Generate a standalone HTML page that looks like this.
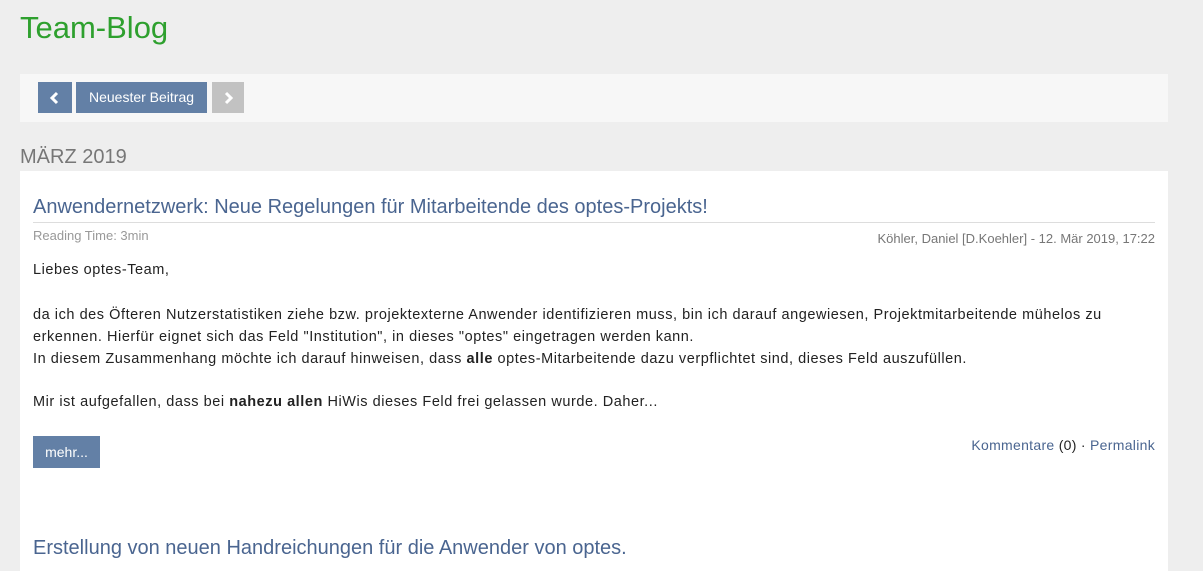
<!DOCTYPE html>
<html><head><meta charset="utf-8"><style>
body{margin:0;background:#eeeeee;font-family:"Liberation Sans","DejaVu Sans",sans-serif;width:1203px;height:559px;overflow:hidden;position:relative}
.a{position:absolute;white-space:nowrap}
h1{position:absolute;left:20px;top:10px;margin:0;font-weight:normal;font-size:31px;color:#2ea02e}
.bar{position:absolute;left:20px;top:74px;width:1148px;height:48px;background:#f7f7f7}
.btn{position:absolute;top:82px;height:31px;background:#6380a6;color:#fff;font-size:14px;line-height:31px;text-align:center}
.card{position:absolute;left:20px;top:171px;width:1148px;height:400px;background:#fff}
.t{font-size:14.5px;color:#222;letter-spacing:0.55px}
.lnk{color:#4a6590}
</style></head><body>
<h1>Team-Blog</h1>
<div class="bar"></div>
<div class="btn" style="left:38px;width:34px"><svg width="12" height="14" viewBox="0 0 12 14" style="margin-top:9px"><path d="M8 2L3 7L8 12" stroke="#fff" stroke-width="3" fill="none"/></svg></div>
<div class="btn" style="left:76px;width:131px">Neuester Beitrag</div>
<div class="btn" style="left:212px;width:32px;background:#c2c2c2"><svg width="12" height="14" viewBox="0 0 12 14" style="margin-top:9px"><path d="M4 2L9 7L4 12" stroke="#fff" stroke-width="3" fill="none"/></svg></div>
<div class="a" style="left:20px;top:146px;font-size:20px;color:#777">MÄRZ 2019</div>
<div class="card"></div>
<div class="a lnk" style="left:33px;top:196px;font-size:20px">Anwendernetzwerk: Neue Regelungen für Mitarbeitende des optes-Projekts!</div>
<div class="a" style="left:33px;top:222px;width:1122px;border-top:1px solid #ddd"></div>
<div class="a" style="left:33px;top:228px;font-size:13px;color:#999">Reading Time: 3min</div>
<div class="a" style="right:48px;top:231px;font-size:13px;color:#777">Köhler, Daniel [D.Koehler] - 12. Mär 2019, 17:22</div>
<div class="a t" style="left:33px;top:262px">Liebes optes-Team,</div>
<div class="a t" style="left:33px;top:304px;line-height:22px">da ich des Öfteren Nutzerstatistiken ziehe bzw. projektexterne Anwender identifizieren muss, bin ich darauf angewiesen, Projektmitarbeitende mühelos zu<br>erkennen. Hierfür eignet sich das Feld "Institution", in dieses "optes" eingetragen werden kann.<br>In diesem Zusammenhang möchte ich darauf hinweisen, dass <b>alle</b> optes-Mitarbeitende dazu verpflichtet sind, dieses Feld auszufüllen.</div>
<div class="a t" style="left:33px;top:394px">Mir ist aufgefallen, dass bei <b>nahezu allen</b> HiWis dieses Feld frei gelassen wurde. Daher...</div>
<div class="btn" style="left:33px;top:436px;width:67px;height:32px;line-height:32px">mehr...</div>
<div class="a t" style="right:48px;top:437px;font-size:14px;letter-spacing:0.3px"><span class="lnk">Kommentare</span> (0) · <span class="lnk">Permalink</span></div>
<div class="a lnk" style="left:33px;top:537px;font-size:20px">Erstellung von neuen Handreichungen für die Anwender von optes.</div>
</body></html>
